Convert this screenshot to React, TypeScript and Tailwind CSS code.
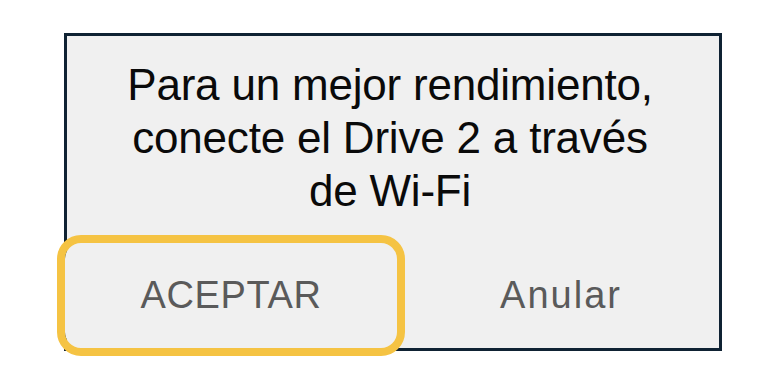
export default function App() {
  return (
    <div className="h-[384px] w-[778px] overflow-hidden bg-white pt-[33px] font-['Liberation_Sans',Arial,sans-serif]">
      <div className="ml-[64px] flex h-[318px] w-[658px] flex-col border-[3px] border-[#0f2233] bg-[#f0f0f0]">
        <p className="pt-[22px] pr-[6px] text-center text-[44px] leading-[53px] tracking-[-0.2px] text-[#0a0a0a]">
          Para un mejor rendimiento,
          <br />
          conecte el Drive 2 a través
          <br />
          de Wi-Fi
        </p>
        <div className="mt-auto flex items-stretch">
          <button
            type="button"
            className="-ml-[2px] h-[105px] w-[332px] rounded-[16px] bg-[#f0f0f0] text-[38px] tracking-[0.6px] text-[#5a5a5a] outline-[8px] outline-solid outline-[#f5c343]"
          >
            ACEPTAR
          </button>
          <button
            type="button"
            className="h-[105px] flex-1 pl-[6px] text-[38px] tracking-[2px] text-[#5a5a5a]"
          >
            Anular
          </button>
        </div>
      </div>
    </div>
  );
}
